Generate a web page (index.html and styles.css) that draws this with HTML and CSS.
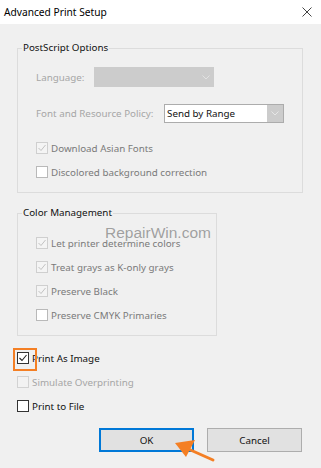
FILE: index.html
```html
<!DOCTYPE html>
<html lang="en">
<head>
  <meta charset="UTF-8" />
  <title>Advanced Print Setup</title>
  <link rel="stylesheet" href="styles.css">
</head>
<body>
  <div class="dialog">
    <div class="titlebar">
      <span class="title">Advanced Print Setup</span>
      <svg class="close" width="10" height="10" viewBox="0 0 10 10">
        <path d="M0.5 0.5 L9.5 9.5 M9.5 0.5 L0.5 9.5" stroke="#444" stroke-width="1" fill="none"/>
      </svg>
    </div>

    <div class="content">
      <!-- PostScript group -->
      <div class="group group-ps">
        <div class="group-title">PostScript Options</div>
        <div class="group-rows">
          <div class="row">
            <span class="lbl lbl-lang off">Language:</span>
            <div class="select select-off">
              <span class="select-text"></span>
              <span class="select-arrow">
                <svg width="8" height="5" viewBox="0 0 8 5"><path d="M0.5 0.5 L4 4 L7.5 0.5" stroke="#e2e2e2" fill="none"/></svg>
              </span>
            </div>
          </div>
          <div class="row row-policy">
            <span class="lbl lbl-policy off">Font and Resource Policy:</span>
            <div class="select select-range">
              <span class="select-text">Send by Range</span>
              <span class="select-arrow">
                <svg width="8" height="5" viewBox="0 0 8 5"><path d="M0.5 0.5 L4 4 L7.5 0.5" stroke="#e6e6e6" fill="none"/></svg>
              </span>
            </div>
          </div>
          <div class="row row-first-check">
            <span class="box box-dim">
              <svg width="10" height="10" viewBox="0 0 10 10"><path d="M1.5 5 L4 7.5 L8.5 2" stroke="#c2c2c2" fill="none"/></svg>
            </span>
            <span class="grey">Download Asian Fonts</span>
          </div>
          <div class="row">
            <span class="box box-blank"></span>
            <span class="grey">Discolored background correction</span>
          </div>
        </div>
      </div>

      <!-- Color management group -->
      <div class="group group-cm">
        <div class="group-title">Color Management</div>
        <div class="group-rows group-rows-cm">
          <div class="row">
            <span class="box box-dim">
              <svg width="10" height="10" viewBox="0 0 10 10"><path d="M1.5 5 L4 7.5 L8.5 2" stroke="#c2c2c2" fill="none"/></svg>
            </span>
            <span class="grey">Let printer determine colors</span>
          </div>
          <div class="row">
            <span class="box box-dim">
              <svg width="10" height="10" viewBox="0 0 10 10"><path d="M1.5 5 L4 7.5 L8.5 2" stroke="#c2c2c2" fill="none"/></svg>
            </span>
            <span class="grey">Treat grays as K-only grays</span>
          </div>
          <div class="row">
            <span class="box box-dim">
              <svg width="10" height="10" viewBox="0 0 10 10"><path d="M1.5 5 L4 7.5 L8.5 2" stroke="#c2c2c2" fill="none"/></svg>
            </span>
            <span class="grey">Preserve Black</span>
          </div>
          <div class="row">
            <span class="box box-blank"></span>
            <span class="grey">Preserve CMYK Primaries</span>
          </div>
        </div>
      </div>

      <!-- loose options -->
      <div class="loose">
        <div class="row">
          <span class="box box-on box-mark">
            <svg width="10" height="10" viewBox="0 0 10 10"><path d="M1.5 5 L4 7.5 L8.5 2" stroke="#222" stroke-width="1.1" fill="none"/></svg>
          </span>
          <span>Print As Image</span>
        </div>
        <div class="row">
          <span class="box box-off"></span>
          <span class="off">Simulate Overprinting</span>
        </div>
        <div class="row">
          <span class="box box-on"></span>
          <span>Print to File</span>
        </div>
      </div>

      <div class="buttons">
        <button class="btn btn-default">OK</button>
        <button class="btn">Cancel</button>
      </div>
    </div>

    <div class="watermark">RepairWin.com</div>

    <svg class="arrow" width="50" height="30" viewBox="0 0 50 30">
      <path d="M16 13 L43 25" stroke="#f47f24" stroke-width="3" stroke-linecap="round"/>
      <polygon points="5,8 25,5 16,22" fill="#f47f24"/>
    </svg>
  </div>
</body>
</html>
```

FILE: styles.css
```css
* {
  box-sizing: border-box;
}

body {
  margin: 0;
  background: #f0f0f0;
  font-family: "Noto Sans", "Open Sans", sans-serif;
  font-size: 9.8px;
  color: #111;
}

.dialog {
  position: relative;
  width: 321px;
  height: 468px;
  overflow: hidden;
}

.titlebar {
  display: flex;
  align-items: center;
  justify-content: space-between;
  height: 24px;
  padding: 0 9px 0 4px;
  background: #fff;
  font-size: 10.2px;
  color: #000;
}

.close {
  display: block;
}

.content {
  padding: 24px 19px 0 17px;
}

.group {
  border: 1px solid #dcdcdc;
}

.group-ps {
  width: 286px;
  padding-bottom: 8px;
}

.group-cm {
  width: 200px;
  margin-top: 20px;
  padding-bottom: 8px;
}

.group-title {
  width: fit-content;
  margin: -8px 0 0 4px;
  padding: 0 1px;
  line-height: 14px;
  background: #f0f0f0;
  color: #111;
}

.group-rows {
  padding-left: 18px;
  margin-top: 10px;
}

.group-rows-cm {
  margin-top: 11px;
}

.row {
  display: flex;
  align-items: center;
  height: 24px;
  white-space: nowrap;
}

.row-policy {
  margin-top: 12px;
}

.row-first-check {
  margin-top: 11px;
}

.lbl-lang {
  width: 58px;
}

.lbl-policy {
  width: 128px;
}

.off {
  color: #a6a6a6;
}

.grey {
  color: #7a7a7a;
}

.select {
  display: flex;
  width: 120px;
  height: 20px;
}

.select-off {
  background: #cccccc;
}

.select-range {
  border: 1px solid #acacac;
  background: #cccccc;
  height: 19px;
}

.select-text {
  flex: 1;
  display: flex;
  align-items: center;
  padding-left: 2px;
  color: #111;
}

.select-range .select-text {
  background: #fff;
}

.select-arrow {
  width: 16px;
  display: flex;
  align-items: center;
  justify-content: center;
}

.select-arrow svg {
  display: block;
}

.box {
  position: relative;
  width: 12px;
  height: 12px;
  margin-right: 3px;
  border: 1px solid #b4b4b4;
  background: #fff;
  display: flex;
  align-items: center;
  justify-content: center;
}

.box svg {
  display: block;
}

.box-dim {
  border-color: #cfcfcf;
  background: #f4f4f4;
}

.box-blank {
  border-color: #b9b9b9;
}

.box-off {
  border-color: #d2d2d2;
  background: #f2f2f2;
}

.box-on {
  border-color: #333;
}

.box-mark::after {
  content: "";
  position: absolute;
  top: -5px;
  left: -5px;
  width: 20px;
  height: 19px;
  border: 2px solid #f47f24;
}

.loose {
  margin-top: 10px;
}

.buttons {
  display: flex;
  justify-content: flex-end;
  gap: 13px;
  margin-top: 10px;
}

.btn {
  width: 95px;
  height: 24px;
  border: 1px solid #adadad;
  background: #e1e1e1;
  font-family: inherit;
  font-size: 9.8px;
  color: #111;
  padding: 0;
}

.btn-default {
  border: 2px solid #0078d7;
}

.watermark {
  position: absolute;
  left: 105px;
  top: 224px;
  font-family: "Liberation Sans", sans-serif;
  font-size: 15.5px;
  color: rgba(90, 90, 90, 0.55);
}

.arrow {
  position: absolute;
  left: 170px;
  top: 435px;
}
```
